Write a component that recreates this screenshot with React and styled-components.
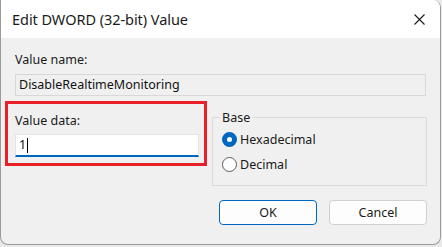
import React from "react";
import styled, { createGlobalStyle } from "styled-components";

const Global = createGlobalStyle`
  html, body { margin: 0; padding: 0; background: #e9e9e9; }
  body { width: 442px; height: 247px; overflow: hidden; font-family: "Noto Sans", "Open Sans", sans-serif; }
`;

const Window = styled.div`
  box-sizing: border-box;
  width: 441px;
  height: 245px;
  border: 1px solid #9a9a9a;
  border-top: none;
  border-radius: 0 8px 8px 8px;
  background: #f0f0f0;
  overflow: hidden;
  display: flex;
  flex-direction: column;
`;

const TitleBar = styled.div`
  height: 38px;
  flex: none;
  background: #ffffff;
  display: flex;
  align-items: center;
  justify-content: space-between;
  padding: 0 15px 0 11px;
  box-sizing: border-box;
`;

const Title = styled.span`
  font-size: 14.5px;
  color: #1a1a1a;
  letter-spacing: -0.05px;
  margin-top: -1px;
`;

const Body = styled.div`
  flex: 1;
  padding: 14px 13px 0 14px;
  display: flex;
  flex-direction: column;
`;

const Label = styled.div`
  font-size: 12.5px;
  color: #1a1a1a;
  line-height: 16px;
`;

const ReadOnlyField = styled.div`
  margin-top: 6px;
  height: 22px;
  box-sizing: border-box;
  border: 1px solid #d8d8d8;
  background: #f0f0f0;
  padding: 0 3px;
  font-size: 12.5px;
  line-height: 20px;
  color: #111;
  margin-right: 1px;
`;

const Row = styled.div`
  display: flex;
  margin-top: 5px;
  margin-left: -10px;
  gap: 5px;
`;

const Highlight = styled.div`
  width: 203px;
  height: 65px;
  box-sizing: border-box;
  border: 3px solid #e8202a;
  padding: 9px 0 0 7px;
`;

const Input = styled.div`
  margin-top: 5px;
  width: 184px;
  height: 23px;
  box-sizing: border-box;
  background: #fff;
  border: 1px solid #e3e3e3;
  border-bottom: 2px solid #0067c0;
  padding: 0 3px;
  font-size: 12.5px;
  line-height: 20px;
  color: #111;
  display: flex;
  align-items: center;
`;

const Caret = styled.span`
  display: inline-block;
  width: 1px;
  height: 15px;
  background: #000;
  margin-left: 1px;
`;

const Group = styled.fieldset`
  margin: 8px 0 0 0;
  width: 216px;
  height: 77px;
  box-sizing: border-box;
  border: 1px solid #dadada;
  padding: 6px 0 0 9px;
  display: flex;
  flex-direction: column;
  gap: 10px;
`;

const Legend = styled.legend`
  font-size: 12.5px;
  color: #1a1a1a;
  padding: 0 2px;
  margin-left: -2px;
`;

const RadioRow = styled.label`
  display: flex;
  align-items: center;
  gap: 3px;
  font-size: 12.5px;
  color: #1a1a1a;
  line-height: 15px;
`;

const RadioDot = styled.span`
  width: 15px;
  height: 15px;
  box-sizing: border-box;
  border-radius: 50%;
  border: ${(p) => (p.$on ? "5px solid #0067c0" : "1px solid #5c5c5c")};
  background: #fff;
`;

const Buttons = styled.div`
  display: flex;
  justify-content: flex-end;
  gap: 12px;
  margin-top: 14px;
`;

const Button = styled.button`
  width: 98px;
  height: 25px;
  box-sizing: border-box;
  border-radius: 4px;
  border: 1px solid ${(p) => (p.$primary ? "#0067c0" : "#d0d0d0")};
  background: #fdfdfd;
  font-family: inherit;
  font-size: 12.5px;
  color: #1a1a1a;
  padding: 0;
`;

function CloseIcon() {
  return (
    <svg width="11" height="11" viewBox="0 0 11 11">
      <path d="M0.5 0.5 L10.5 10.5 M10.5 0.5 L0.5 10.5" stroke="#1a1a1a" strokeWidth="1.1" />
    </svg>
  );
}

export default function App() {
  return (
    <>
      <Global />
      <Window>
        <TitleBar>
          <Title>Edit DWORD (32-bit) Value</Title>
          <CloseIcon />
        </TitleBar>
        <Body>
          <Label>Value name:</Label>
          <ReadOnlyField>DisableRealtimeMonitoring</ReadOnlyField>
          <Row>
            <Highlight>
              <Label>Value data:</Label>
              <Input>
                1<Caret />
              </Input>
            </Highlight>
            <Group>
              <Legend>Base</Legend>
              <RadioRow>
                <RadioDot $on />
                Hexadecimal
              </RadioRow>
              <RadioRow>
                <RadioDot />
                Decimal
              </RadioRow>
            </Group>
          </Row>
          <Buttons>
            <Button $primary>OK</Button>
            <Button>Cancel</Button>
          </Buttons>
        </Body>
      </Window>
    </>
  );
}
